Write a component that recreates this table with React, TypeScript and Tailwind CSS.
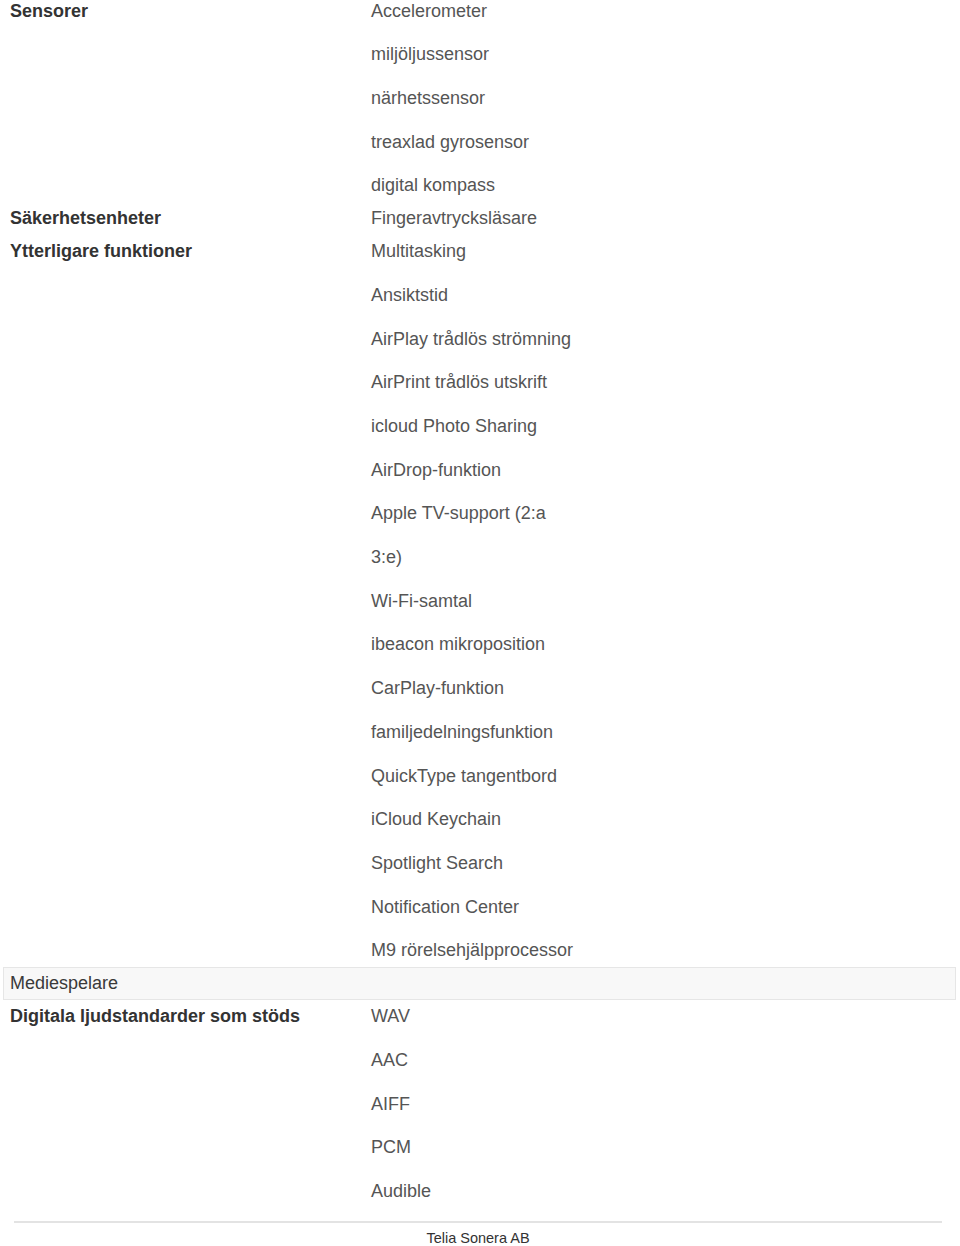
import React from "react";

type Row = { label: string; values: string[]; header?: boolean };

const rows: Row[] = [
  {
    label: "Sensorer",
    values: ["Accelerometer", "miljöljussensor", "närhetssensor", "treaxlad gyrosensor", "digital kompass"],
  },
  { label: "Säkerhetsenheter", values: ["Fingeravtrycksläsare"] },
  {
    label: "Ytterligare funktioner",
    values: [
      "Multitasking",
      "Ansiktstid",
      "AirPlay trådlös strömning",
      "AirPrint trådlös utskrift",
      "icloud Photo Sharing",
      "AirDrop-funktion",
      "Apple TV-support (2:a",
      "3:e)",
      "Wi-Fi-samtal",
      "ibeacon mikroposition",
      "CarPlay-funktion",
      "familjedelningsfunktion",
      "QuickType tangentbord",
      "iCloud Keychain",
      "Spotlight Search",
      "Notification Center",
      "M9 rörelsehjälpprocessor",
    ],
  },
  { label: "Mediespelare", values: [], header: true },
  { label: "Digitala ljudstandarder som stöds", values: ["WAV", "AAC", "AIFF", "PCM", "Audible"] },
];

export default function App() {
  return (
    <div
      className="w-[960px] h-[1246px] overflow-hidden bg-white"
      style={{ fontFamily: '"Liberation Sans", Arial, sans-serif' }}
    >
      <div className="mt-[-5.5px] ml-[3px] w-[953px] flex flex-col">
        {rows.map((r) =>
          r.header ? (
            <div
              key={r.label}
              className="border border-[#e6e6e6] bg-[#f8f8f8] px-[6px] py-[5px] text-[18px] leading-[21px] text-[#3a3a3a]"
            >
              {r.label}
            </div>
          ) : (
            <div key={r.label} className="flex py-[6px] text-[18px] leading-[21px]">
              <div className="w-[361px] px-[7px] font-bold text-[#333333]">{r.label}</div>
              <div className="flex flex-col gap-[22.7px] px-[7px] text-[#555555]">
                {r.values.map((v) => (
                  <div key={v}>{v}</div>
                ))}
              </div>
            </div>
          )
        )}
      </div>
      <div className="mt-[13px] ml-[14px] w-[928px] h-[2px] bg-[#e3e3e3]" />
      <div className="ml-[14px] w-[928px] pt-[7px] text-center text-[14.5px] leading-[17px] text-[#333333]">
        Telia Sonera AB
      </div>
    </div>
  );
}
